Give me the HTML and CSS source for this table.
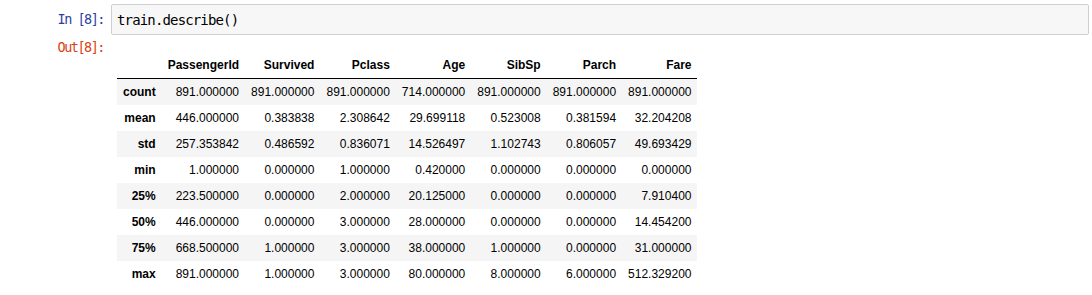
FILE: index.html
```html
<!DOCTYPE html>
<html>
<head>
<meta charset="utf-8">
<link rel="stylesheet" href="styles.css">
</head>
<body>
<div class="cell">
  <div class="row in-row">
    <div class="prompt in-prompt">In&nbsp;[8]:</div>
    <div class="input-box"><span class="code">train.describe()</span></div>
  </div>
  <div class="row out-row">
    <div class="prompt out-prompt">Out[8]:</div>
    <div class="output">
      <table class="df">
        <thead>
          <tr><th></th><th>PassengerId</th><th>Survived</th><th>Pclass</th><th>Age</th><th>SibSp</th><th>Parch</th><th>Fare</th></tr>
        </thead>
        <tbody>
          <tr><th>count</th><td>891.000000</td><td>891.000000</td><td>891.000000</td><td>714.000000</td><td>891.000000</td><td>891.000000</td><td>891.000000</td></tr>
          <tr><th>mean</th><td>446.000000</td><td>0.383838</td><td>2.308642</td><td>29.699118</td><td>0.523008</td><td>0.381594</td><td>32.204208</td></tr>
          <tr><th>std</th><td>257.353842</td><td>0.486592</td><td>0.836071</td><td>14.526497</td><td>1.102743</td><td>0.806057</td><td>49.693429</td></tr>
          <tr><th>min</th><td>1.000000</td><td>0.000000</td><td>1.000000</td><td>0.420000</td><td>0.000000</td><td>0.000000</td><td>0.000000</td></tr>
          <tr><th>25%</th><td>223.500000</td><td>0.000000</td><td>2.000000</td><td>20.125000</td><td>0.000000</td><td>0.000000</td><td>7.910400</td></tr>
          <tr><th>50%</th><td>446.000000</td><td>0.000000</td><td>3.000000</td><td>28.000000</td><td>0.000000</td><td>0.000000</td><td>14.454200</td></tr>
          <tr><th>75%</th><td>668.500000</td><td>1.000000</td><td>3.000000</td><td>38.000000</td><td>1.000000</td><td>0.000000</td><td>31.000000</td></tr>
          <tr><th>max</th><td>891.000000</td><td>1.000000</td><td>3.000000</td><td>80.000000</td><td>8.000000</td><td>6.000000</td><td>512.329200</td></tr>
        </tbody>
      </table>
    </div>
  </div>
</div>
</body>
</html>
```

FILE: styles.css
```css
html, body {
  margin: 0;
  padding: 0;
  background: #ffffff;
}
.cell {
  padding-top: 4px;
}
.row {
  display: flex;
  align-items: flex-start;
}
.prompt {
  width: 111px;
  box-sizing: border-box;
  padding-right: 7px;
  text-align: right;
  font-family: "DejaVu Sans Mono", monospace;
  font-size: 13.5px;
  letter-spacing: -1.5px;
  white-space: nowrap;
}
.in-prompt {
  color: #303f9f;
  line-height: 31px;
}
.out-prompt {
  color: #d84315;
  line-height: 17px;
}
.input-box {
  flex: 1;
  margin-right: 3px;
  height: 31px;
  box-sizing: border-box;
  background: #f7f7f7;
  border: 1px solid #cfcfcf;
  border-radius: 2px;
  display: flex;
  align-items: center;
  padding-left: 5px;
}
.code {
  font-family: "DejaVu Sans Mono", monospace;
  font-size: 14px;
  letter-spacing: -0.85px;
  color: #000;
}
.out-row {
  margin-top: 4px;
}
.output {
  padding-top: 13px;
  padding-left: 6px;
}
.df {
  border-collapse: collapse;
  border-spacing: 0;
  font-family: "Liberation Sans", Arial, sans-serif;
  font-size: 12px;
  color: #000;
}
.df th, .df td {
  padding: 6px 6px;
  text-align: right;
  vertical-align: middle;
  line-height: 14px;
  white-space: nowrap;
}
.df th {
  font-weight: bold;
}
.df thead th {
  border-bottom: 1px solid #000;
}
.df tbody tr:nth-child(odd) {
  background: #f5f5f5;
}
```
